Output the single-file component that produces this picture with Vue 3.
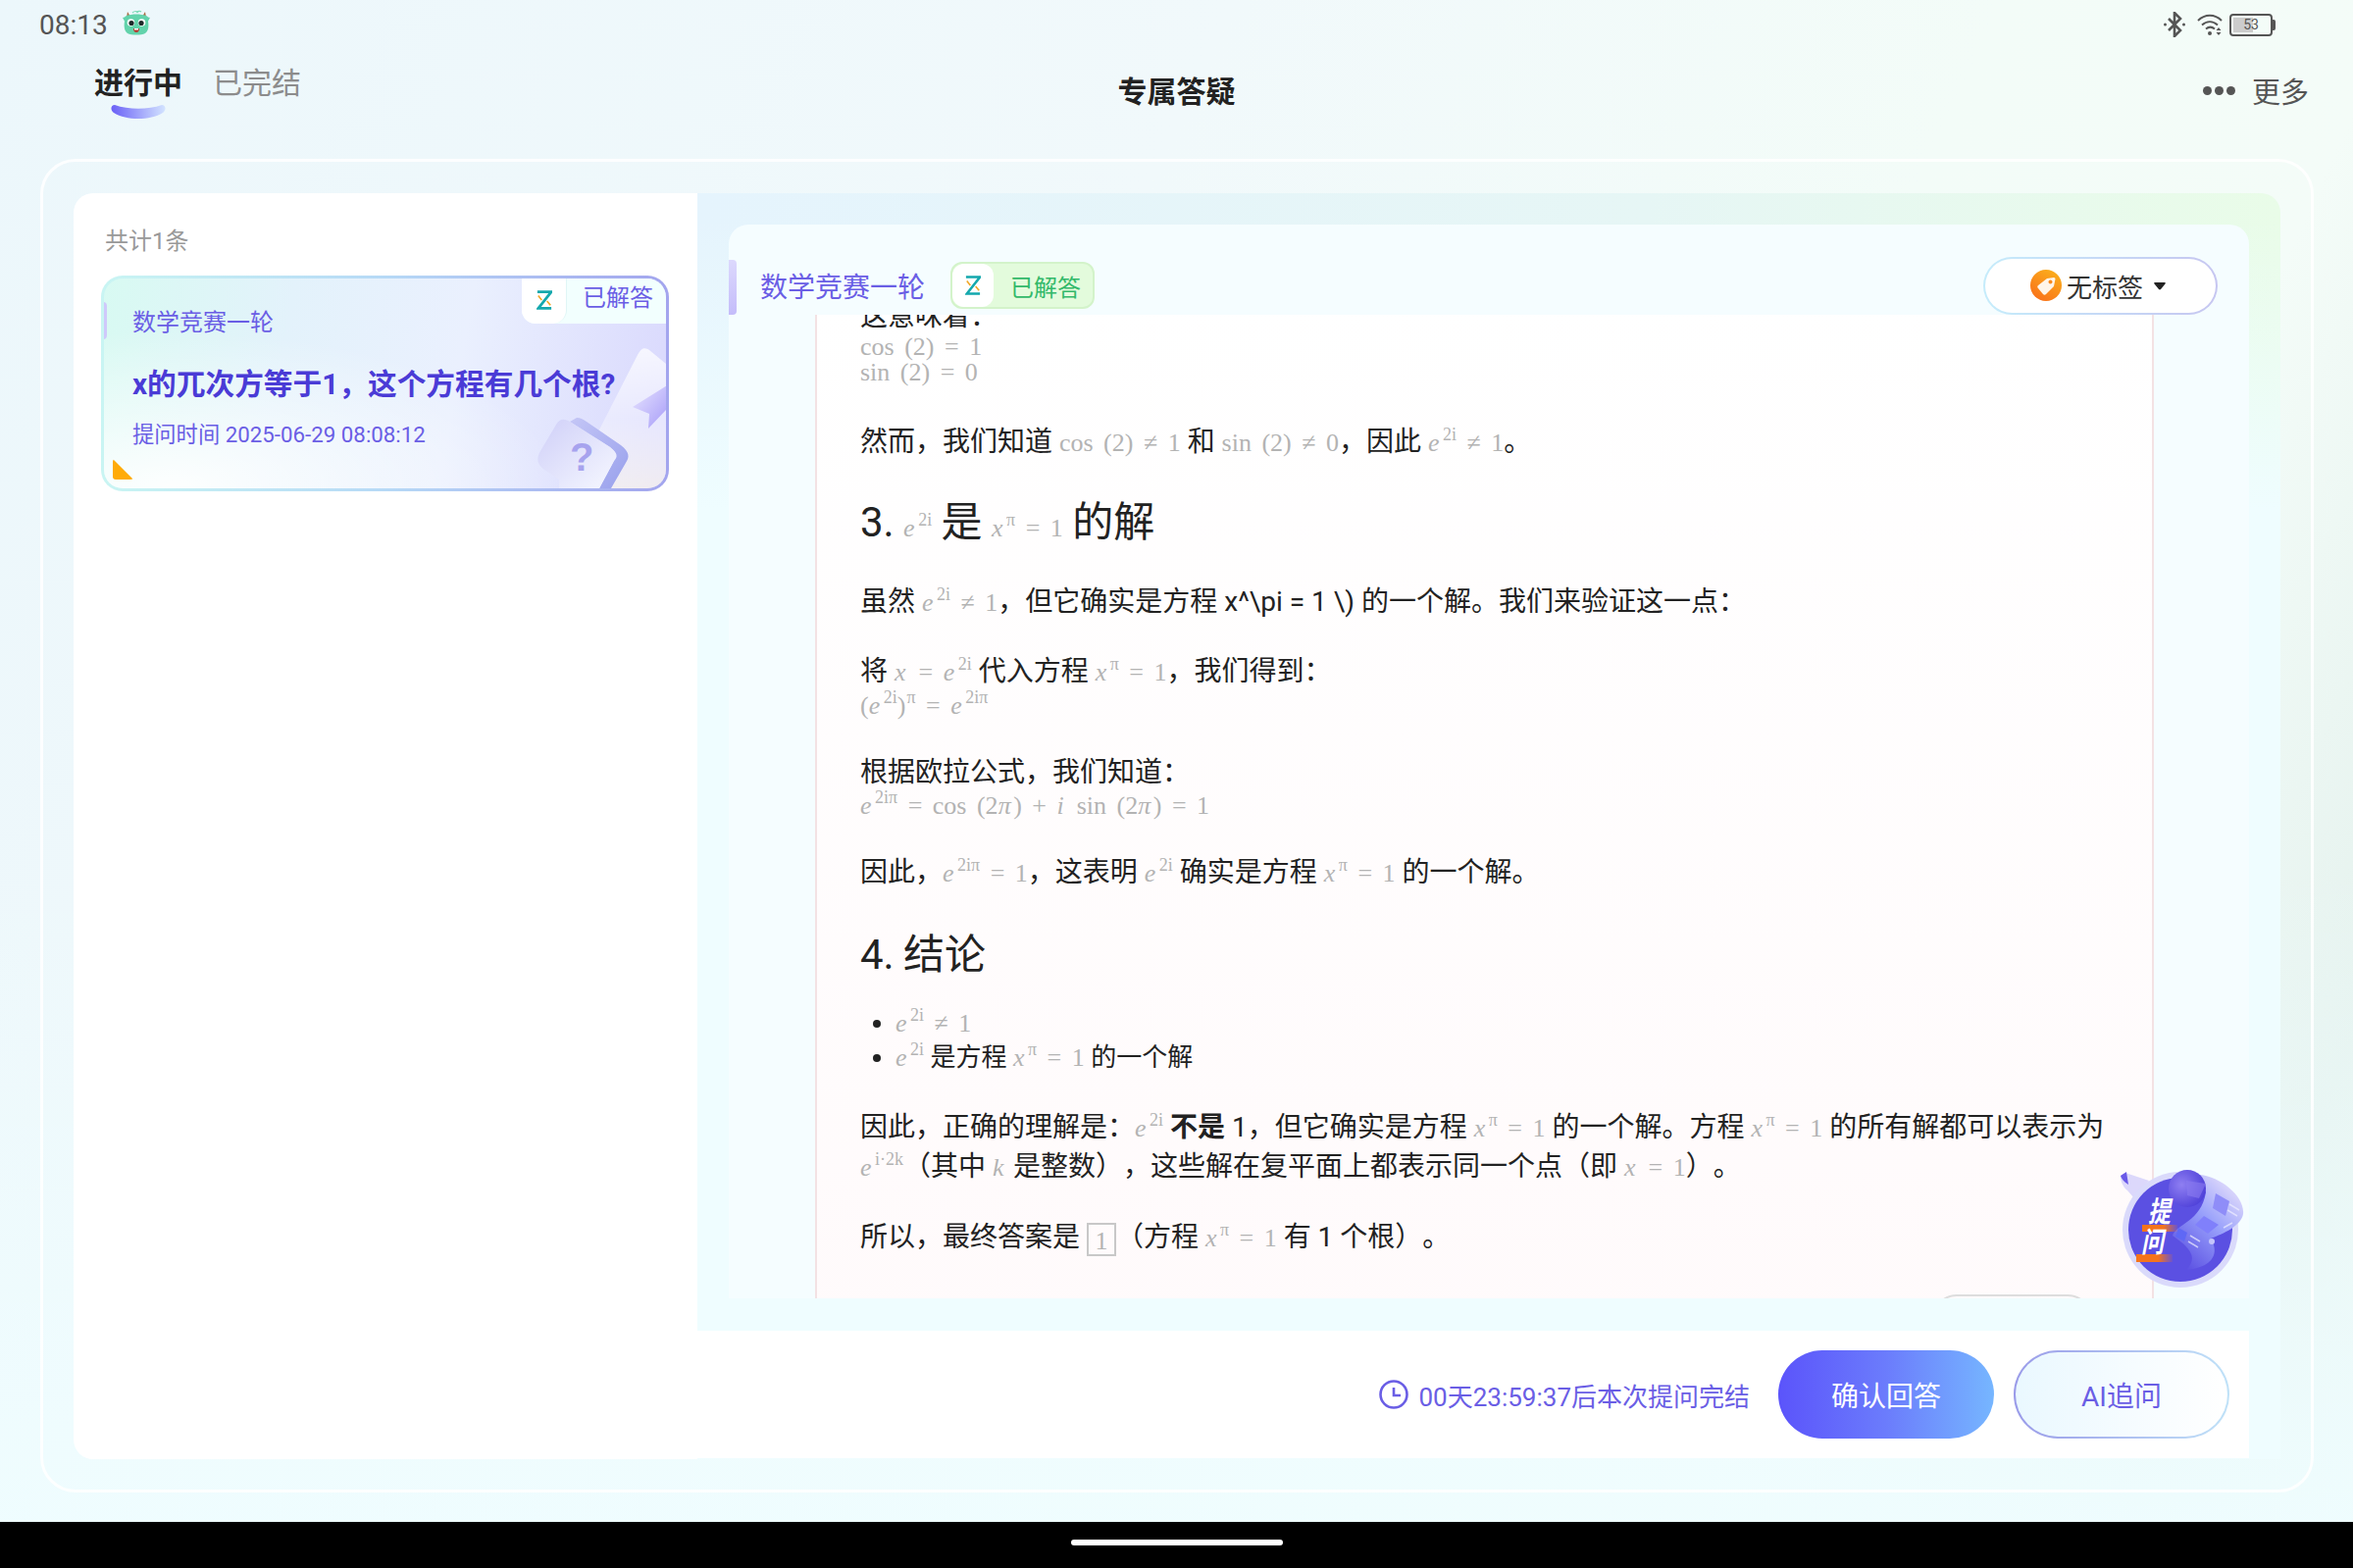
<template>
  <div class="page">
    <div class="status-bar">
      <div class="status-left">
        <span class="time">08:13</span>
        <svg class="dragon" viewBox="0 0 30 28">
          <path d="M11 4c2-2 5-2 6 0M15 4c1-2 4-2 5-1" fill="none" stroke="#7edcb8" stroke-width="1.200" />
          <path d="M6 3l3 5-4 1zM24 3l-3 5 4 1z" fill="#a9683f" />
          <path d="M5 7c6-2 14-2 20 0 2 1 2 2 4 2-1 2-2 3-2 4 1 5 0 10-3 12-4 2-14 2-18 0-3-2-4-7-3-12 0-1-1-2-2-4 2 0 2-1 4-2z" fill="#62d3ab" />
          <circle cx="9.500" cy="14" r="3.800" fill="#fff" />
          <circle cx="20.500" cy="14" r="3.800" fill="#fff" />
          <circle cx="10" cy="14.500" r="2.600" fill="#1f2a2a" />
          <circle cx="20" cy="14.500" r="2.600" fill="#1f2a2a" />
          <path d="M12 20h6c0 3-1.500 4-3 4s-3-1-3-4z" fill="#b5392f" />
          <path d="M13 20h4v1.500h-4z" fill="#fff" />
        </svg>
      </div>
      <div class="status-right">
        <svg class="bt" viewBox="0 0 22 26">
          <path d="M5 7l12 12-6 6V1l6 6L5 19" fill="none" stroke="#555" stroke-width="2.600" />
          <circle cx="1.500" cy="13" r="1.500" fill="#555" />
          <circle cx="20.500" cy="13" r="1.500" fill="#555" />
        </svg>
        <svg class="wifi" viewBox="0 0 27 24">
          <path d="M1 8c7-7 17-7 24 0M5 12.500c5-4.500 11-4.500 16 0M9 16.500c3-2.500 6-2.500 9 0" fill="none" stroke="#555" stroke-width="2" />
          <circle cx="13" cy="21" r="2" fill="#555" />
          <path d="M22 15l2.500 3h-5zM22 23l2.500-3h-5z" fill="#555" />
        </svg>
        <div class="battery">
          <div class="battery-body">
            <div class="battery-fill"></div>
            <span>53</span>
          </div>
          <div class="battery-cap"></div>
        </div>
      </div>
    </div>

    <header class="top-bar">
      <div class="tabs">
        <div class="tab active">
          <span>进行中</span>
          <svg class="tab-mark" viewBox="0 0 56 14">
            <defs>
              <linearGradient id="tabMark" x1="0" x2="1" y1="0" y2="0">
                <stop offset="0" stop-color="#6a60f6" />
                <stop offset="1" stop-color="#d3e4ff" />
              </linearGradient>
            </defs>
            <path d="M4 0c14 5 34 5 48 0 4 0 5 5 1 8C40 16 16 16 3 8-1 5 0 0 4 0z" fill="url(#tabMark)" />
          </svg>
        </div>
        <div class="tab">已完结</div>
      </div>
      <h1 class="page-title">专属答疑</h1>
      <div class="more">
        <span class="dots"><i></i><i></i><i></i></span>
        <span>更多</span>
      </div>
    </header>

    <main class="frame">
      <aside class="list-panel">
        <div class="list-count">共计1条</div>
        <div class="q-card">
          <svg class="q-deco" viewBox="0 0 573 214">
            <defs>
              <linearGradient id="decoDoc" x1="0" x2="0" y1="0" y2="1">
                <stop offset="0" stop-color="#fff" stop-opacity="0.75" />
                <stop offset="0.5" stop-color="#fff" stop-opacity="0.35" />
                <stop offset="1" stop-color="#fff8e8" stop-opacity="0.6" />
              </linearGradient>
              <linearGradient id="decoMark" x1="0" x2="1" y1="0" y2="1">
                <stop offset="0" stop-color="#e9e6ff" />
                <stop offset="1" stop-color="#a79cf8" />
              </linearGradient>
              <linearGradient id="decoBack" x1="0" x2="1" y1="0" y2="1">
                <stop offset="0" stop-color="#c4c6f6" />
                <stop offset="1" stop-color="#98a0ec" />
              </linearGradient>
              <linearGradient id="decoFront" x1="0" x2="1" y1="0" y2="1">
                <stop offset="0" stop-color="#cfcff8" />
                <stop offset="1" stop-color="#f6f8ff" />
              </linearGradient>
            </defs>
            <path d="M500 164l44-86c4-8 8-8 12-5l17 14v127h-73z" fill="url(#decoDoc)" />
            <path d="M539 131l35-22v24l-19 20 1-15z" fill="url(#decoMark)" />
            <path d="M482 142c4 0 7 2 10 4l35 24c9 7 9 12 5 18l-15 26h-12l15-28c4-8 0-10-4-14l-41-26z" fill="url(#decoBack)" />
            <path d="M445 176l16-27c4-7 9-6 14-3l41 26c8 6 8 10 4 14l-15 28h-41v-9l-15-10c-8-6-8-12-4-19z" fill="url(#decoFront)" />
            <text x="475" y="196" class="deco-q">?</text>
          </svg>
          <span class="q-accent"></span>
          <div class="q-status">
            <span class="q-logo">
              <svg class="z-icon" viewBox="0 0 18 24">
                <path d="M1 2.500h16L2 21.500h15" fill="none" stroke="#14a8ad" stroke-width="3.200" />
                <path d="M2 7l4 5M12 13l4 5" stroke="#f2a724" stroke-width="1.800" />
              </svg>
            </span>
            <span class="q-status-text">已解答</span>
          </div>
          <div class="q-subject">数学竞赛一轮</div>
          <div class="q-title">x的兀次方等于1，这个方程有几个根?</div>
          <div class="q-time">提问时间 2025-06-29 08:08:12</div>
          <span class="q-corner"></span>
        </div>
      </aside>

      <section class="detail">
        <div class="answer-card">
          <div class="answer-head">
            <span class="head-accent"></span>
            <span class="head-subject">数学竞赛一轮</span>
            <div class="head-chip">
              <span class="chip-logo">
                <svg class="z-icon" viewBox="0 0 18 24">
                  <path d="M1 2.500h16L2 21.500h15" fill="none" stroke="#14a8ad" stroke-width="2.800" />
                  <path d="M2 7l4 5M12 13l4 5" stroke="#f2a724" stroke-width="1.800" />
                </svg>
              </span>
              <span class="chip-text">已解答</span>
            </div>
            <div class="tag-pill">
              <svg class="tag-icon" viewBox="0 0 32 32">
                <defs>
                  <linearGradient id="tagBg" x1="0.8" x2="0.2" y1="0" y2="1">
                    <stop offset="0" stop-color="#fbb01c" />
                    <stop offset="1" stop-color="#f9701a" />
                  </linearGradient>
                </defs>
                <circle cx="16" cy="16" r="16" fill="url(#tagBg)" />
                <path d="M8 16l9-7 7-1c1 0 1.500 1 1.500 1.500L24 17l-8 8c-1 1-2 1-3 0l-5-6c-1-1-1-2 0-3z" fill="#fff5e8" />
                <circle cx="20.500" cy="12.500" r="2" fill="#f98a1c" />
              </svg>
              <span>无标签</span>
              <svg class="tag-caret" viewBox="0 0 12 9">
                <path d="M1 1h10c1 0 1 1 .5 1.500L7 8c-.5.5-1.500.5-2 0L.5 2.500C0 2 0 1 1 1z" fill="#222" />
              </svg>
            </div>
          </div>

          <div class="answer-scroll">
            <div class="answer-body">
              <p class="clipped">这意味着：</p>
              <div class="m-line"><span class="m">cos (2) = 1</span></div>
              <div class="m-line"><span class="m">sin (2) = 0</span></div>

              <p class="after-math first">
                然而，我们知道 <span class="m">cos (2) ≠ 1</span> 和 <span class="m">sin (2) ≠ 0</span>，因此 <span class="m"><i>e</i><sup>2i</sup> ≠ 1</span>。
              </p>

              <h3>3. <span class="m"><i>e</i><sup>2i</sup></span> 是 <span class="m"><i>x</i><sup>π</sup> = 1</span> 的解</h3>

              <p class="short">虽然 <span class="m"><i>e</i><sup>2i</sup> ≠ 1</span>，但它确实是方程 x^\pi = 1 \) 的一个解。我们来验证这一点：</p>

              <p class="with-math">将 <span class="m"><i>x</i> = <i>e</i><sup>2i</sup></span> 代入方程 <span class="m"><i>x</i><sup>π</sup> = 1</span>，我们得到：</p>
              <div class="m-line"><span class="m">(<i>e</i><sup>2i</sup>)<sup>π</sup> = <i>e</i><sup>2iπ</sup></span></div>

              <p class="with-math after-math">根据欧拉公式，我们知道：</p>
              <div class="m-line"><span class="m"><i>e</i><sup>2iπ</sup> = cos (2<i>π</i>) + <i>i</i> sin (2<i>π</i>) = 1</span></div>

              <p class="after-math">因此，<span class="m"><i>e</i><sup>2iπ</sup> = 1</span>，这表明 <span class="m"><i>e</i><sup>2i</sup></span> 确实是方程 <span class="m"><i>x</i><sup>π</sup> = 1</span> 的一个解。</p>

              <h3 class="before-list">4. 结论</h3>

              <ul>
                <li><span class="m"><i>e</i><sup>2i</sup> ≠ 1</span></li>
                <li><span class="m"><i>e</i><sup>2i</sup></span> 是方程 <span class="m"><i>x</i><sup>π</sup> = 1</span> 的一个解</li>
              </ul>

              <p class="tight">
                因此，正确的理解是：<span class="m"><i>e</i><sup>2i</sup></span> <b>不是</b> 1，但它确实是方程 <span class="m"><i>x</i><sup>π</sup> = 1</span> 的一个解。方程 <span class="m"><i>x</i><sup>π</sup> = 1</span> 的所有解都可以表示为<br>
                <span class="m"><i>e</i><sup>i·2k</sup></span>（其中 <span class="m"><i>k</i></span> 是整数），这些解在复平面上都表示同一个点（即 <span class="m"><i>x</i> = 1</span>）。
              </p>

              <p>所以，最终答案是 <span class="m box">1</span>（方程 <span class="m"><i>x</i><sup>π</sup> = 1</span> 有 1 个根）。</p>

              <div class="next-btn"></div>
            </div>
          </div>
        </div>

        <div class="action-bar">
          <svg class="clock" viewBox="0 0 30 30">
            <circle cx="15" cy="15" r="13.500" fill="none" stroke="#6a5ee5" stroke-width="2.600" />
            <path d="M15 8v8h7" fill="none" stroke="#6a5ee5" stroke-width="2.600" />
          </svg>
          <span class="countdown">00天23:59:37后本次提问完结</span>
          <button class="btn primary">确认回答</button>
          <button class="btn ghost">AI追问</button>
        </div>

        <svg class="ask-float" viewBox="0 0 130 130">
          <defs>
            <linearGradient id="ribbon" x1="0.9" x2="0.2" y1="0" y2="1">
              <stop offset="0" stop-color="#f0e8fb" />
              <stop offset="0.5" stop-color="#98a0fb" />
              <stop offset="1" stop-color="#5b50e2" />
            </linearGradient>
            <radialGradient id="ball" cx="0.35" cy="0.4" r="0.7">
              <stop offset="0" stop-color="#8f7ff2" />
              <stop offset="1" stop-color="#4d3fd8" />
            </radialGradient>
            <linearGradient id="barFade" x1="0" x2="1" y1="0" y2="0">
              <stop offset="0" stop-color="#f5741c" />
              <stop offset="0.6" stop-color="#f5741c" />
              <stop offset="1" stop-color="#f5741c" stop-opacity="0.1" />
            </linearGradient>
          </defs>
          <path d="M3 11l5-3 24 8-15 18-7-8c-5-4-7-10-7-15z" fill="#dcd8fb" />
          <path d="M3 11l6-4 2 13c-5-3-7-6-8-9z" fill="#6a5ae8" />
          <circle cx="64" cy="66" r="59" fill="#dadafb" />
          <circle cx="64" cy="66" r="53" fill="#5b50e2" />
          <path d="M84 10c21 2 46 22 44 40-2 12-20 20-33 25 8 13 5 29-25 32 12-12 5-22-14-35 4-12 29-14 34-44z" fill="url(#ribbon)" />
          <circle cx="71" cy="24" r="19" fill="url(#ball)" />
          <path d="M70 16l20 3-7 15-12-3z" fill="#8a7bf0" opacity="0.6" />
          <path d="M100 29l14 8-4 15-13-8z" fill="#8f8df8" />
          <path d="M88 52l15 9-11 9-13-9z" fill="#8080fb" />
          <path d="M62 64l9 5-3 9-9-5z" fill="#5f68f5" />
          <path d="M114 40l10 6M112 46l10 6M108 64l9-5M74 72l10 6M72 78l10 6" stroke="#eef" stroke-width="1.500" opacity="0.7" />
          <circle cx="96" cy="78" r="3" fill="#c4c4fb" />
          <rect x="25" y="61" width="36" height="7" fill="url(#barFade)" />
          <rect x="19" y="91" width="37" height="8" fill="url(#barFade)" />
          <text transform="translate(31 58) scale(0.85 1.08)" class="ask-text">提</text>
          <text transform="translate(24 89) scale(0.85 1.08)" class="ask-text">问</text>
        </svg>
      </section>
    </main>

    <div class="nav-bar">
      <span class="home-bar"></span>
    </div>
  </div>
</template>

<script setup>
</script>

<style>
html,
body {
  margin: 0;
  background: #000;
}
</style>

<style scoped>
.page {
  width: 2399px;
  height: 1599px;
  display: flex;
  flex-direction: column;
  overflow: hidden;
  font-family: Roboto, "Noto Sans CJK SC", sans-serif;
  color: #222;
  text-spacing-trim: space-all;
  background:
    linear-gradient(180deg, rgba(239, 253, 255, 0) 55%, #effdff 100%),
    linear-gradient(115deg, #ecf7fb 0%, #f1f9fb 40%, #f3fcf8 65%, #f4fcf8 78%, #e5f2ee 92%, #e9f5f1 100%);
}

.status-bar {
  height: 50px;
  flex-shrink: 0;
  display: flex;
  align-items: center;
  justify-content: space-between;
  padding: 0 79px 0 40px;
}

.status-left {
  display: flex;
  align-items: center;
  gap: 14px;
}

.time {
  font-size: 28px;
  color: #555;
}

.dragon {
  width: 30px;
  height: 28px;
  margin-top: -4px;
}

.status-right {
  display: flex;
  align-items: center;
  gap: 12px;
}

.bt {
  width: 22px;
  height: 26px;
}

.wifi {
  width: 27px;
  height: 24px;
}

.battery {
  display: flex;
  align-items: center;
  margin-left: -6px;
}

.battery-body {
  position: relative;
  width: 44px;
  height: 23px;
  box-sizing: border-box;
  border: 2px solid #555;
  border-radius: 4px;
  padding: 2px;
  font-size: 14px;
  line-height: 15px;
  text-align: center;
  color: #555;
}

.battery-fill {
  position: absolute;
  left: 2px;
  top: 2px;
  bottom: 2px;
  width: 20px;
  background: #ccc;
}

.battery-body span {
  position: relative;
}

.battery-cap {
  width: 3px;
  height: 11px;
  background: #555;
  border-radius: 0 2px 2px 0;
}

.top-bar {
  height: 112px;
  flex-shrink: 0;
  display: grid;
  grid-template-columns: 1fr auto 1fr;
  padding: 0 45px;
}

.tabs {
  display: flex;
  gap: 31px;
  padding: 15px 0 0 51px;
  align-items: flex-start;
}

.tab {
  display: flex;
  flex-direction: column;
  align-items: center;
  font-size: 30px;
  line-height: 40px;
  color: #8c8c8c;
}

.tab.active {
  color: #222;
  font-weight: 700;
}

.tab-mark {
  width: 56px;
  height: 14px;
  margin-top: 2px;
}

.page-title {
  margin: 24px 0 0;
  font-size: 30px;
  line-height: 40px;
  font-weight: 700;
  color: #222;
}

.more {
  display: flex;
  align-items: center;
  justify-content: flex-end;
  gap: 17px;
  height: 40px;
  margin-top: 22px;
  font-size: 29px;
  color: #555;
}

.dots {
  display: flex;
  gap: 3px;
}

.dots i {
  width: 9px;
  height: 9px;
  border-radius: 50%;
  background: #555;
}

.frame {
  flex-shrink: 0;
  height: 1360px;
  box-sizing: border-box;
  margin: 0 40px 30px 41px;
  padding: 32px 31px 31px;
  border: 3px solid rgba(255, 255, 255, 0.85);
  border-radius: 36px;
  display: flex;
}

.list-panel {
  width: 636px;
  flex-shrink: 0;
  box-sizing: border-box;
  padding: 33px 28px;
  background: #fff;
  border-radius: 20px 0 0 20px;
}

.list-count {
  font-size: 24px;
  line-height: 32px;
  padding-left: 4px;
  color: #999;
  margin-bottom: 19px;
}

.q-card {
  position: relative;
  width: 579px;
  height: 220px;
  box-sizing: border-box;
  border: 3px solid transparent;
  border-radius: 22px;
  overflow: hidden;
  background:
    radial-gradient(ellipse 70% 75% at 12% 100%, rgba(255, 255, 255, 0.95), rgba(255, 255, 255, 0)) padding-box,
    linear-gradient(100deg, #d8faf2 0%, #e3f2fb 32%, #eaf0fe 62%, #d9d8fd 100%) padding-box,
    linear-gradient(90deg, #c9f5f3 0%, #b6d9f6 50%, #a3a5ee 100%) border-box;
}

.q-deco {
  position: absolute;
  left: 0;
  top: 0;
  width: 573px;
  height: 214px;
}

.deco-q {
  font-family: "Liberation Sans", sans-serif;
  font-size: 40px;
  font-weight: 700;
  fill: #a7a3ee;
}

.q-accent {
  position: absolute;
  left: -3px;
  top: 24px;
  width: 6px;
  height: 38px;
  border-radius: 0 4px 4px 0;
  background: #cfc9fb;
}

.q-status {
  position: absolute;
  right: 0;
  top: -3px;
  height: 49px;
  display: flex;
  background: #f2fffe;
  border-radius: 0 0 0 14px;
}

.q-logo {
  width: 45px;
  display: flex;
  align-items: center;
  justify-content: center;
  background: #fff;
  border-radius: 0 0 14px 14px;
  border-right: 1px solid #e0f6f6;
}

.z-icon {
  width: 16px;
  height: 22px;
}

.q-status-text {
  padding: 0 13px 0 16px;
  font-size: 24px;
  line-height: 46px;
  color: #6a5ee5;
}

.q-subject {
  position: relative;
  margin: 29px 0 0 29px;
  font-size: 24px;
  line-height: 32px;
  color: #6a5ee5;
}

.q-title {
  position: relative;
  margin: 27px 0 0 29px;
  font-size: 29.700px;
  line-height: 40px;
  font-weight: 700;
  color: #4a3bd6;
  white-space: nowrap;
}

.q-time {
  position: relative;
  margin: 15px 0 0 29px;
  font-size: 22.300px;
  line-height: 32px;
  color: #6a5ee5;
}

.q-corner {
  position: absolute;
  left: 9px;
  bottom: 9px;
  width: 21px;
  height: 21px;
  background: #ffab08;
  clip-path: polygon(0 0, 100% 100%, 0 100%);
  border-radius: 3px;
}

.detail {
  position: relative;
  flex: 1;
  display: flex;
  flex-direction: column;
  box-sizing: border-box;
  padding: 32px 32px 0;
  border-radius: 0 20px 0 0;
  background:
    linear-gradient(180deg, rgba(239, 253, 255, 0) 2%, #effdff 25%),
    linear-gradient(90deg, #e5f4fd 0%, #e6f6f5 60%, #e9fce8 100%);
}

.answer-card {
  height: 1095px;
  flex-shrink: 0;
  display: flex;
  flex-direction: column;
  background: #f5fdff;
  border-radius: 20px 20px 0 0;
}

.answer-head {
  height: 92px;
  flex-shrink: 0;
  display: flex;
  align-items: center;
  padding: 32px 32px 0 0;
  box-sizing: border-box;
}

.head-accent {
  width: 8px;
  height: 56px;
  margin-top: 4px;
  border-radius: 0 4px 4px 0;
  background: linear-gradient(180deg, #dcd8fd, #c4bcfa);
}

.head-subject {
  margin-left: 24px;
  font-size: 28px;
  color: #6a5ee5;
}

.head-chip {
  display: flex;
  align-items: center;
  height: 48px;
  box-sizing: border-box;
  margin-left: 26px;
  padding-right: 12px;
  border: 2px solid #d3f3ca;
  border-radius: 12px;
  background: #e3fbdc;
}

.chip-logo {
  width: 42px;
  height: 44px;
  display: flex;
  align-items: center;
  justify-content: center;
  background: #fff;
  border-radius: 12px;
}

.chip-text {
  margin-left: 17px;
  font-size: 24px;
  color: #33b96a;
}

.tag-pill {
  margin-left: auto;
  display: flex;
  align-items: center;
  justify-content: center;
  gap: 5px;
  width: 239px;
  height: 59px;
  box-sizing: border-box;
  padding-right: 5px;
  border: 2px solid transparent;
  border-radius: 30px;
  font-size: 26px;
  color: #333;
  background:
    linear-gradient(#fff, #fff) padding-box,
    linear-gradient(90deg, #c5ecfb, #c6c6f1) border-box;
}

.tag-icon {
  width: 32px;
  height: 32px;
}

.tag-caret {
  width: 12px;
  height: 9px;
  margin-left: 6px;
}

.answer-scroll {
  flex: 1;
  min-height: 0;
  overflow: hidden;
  padding: 0 97px 0 88px;
}

.answer-body {
  display: flex;
  flex-direction: column;
  height: 1100px;
  box-sizing: border-box;
  margin-top: -15px;
  padding: 0 45px 0 44px;
  border-left: 2px solid #f3e2e4;
  border-right: 2px solid #f3e2e4;
  background: linear-gradient(180deg, #fff 0%, #fffafb 100%);
  font-size: 28px;
  line-height: 40px;
  color: #222;
}

.answer-body p {
  margin: 0 0 33px;
  white-space: nowrap;
  flex-shrink: 0;
}

.answer-body p.clipped {
  line-height: 34px;
  margin: 0;
}

.answer-body p.short {
  margin-bottom: 30px;
}

.answer-body p.with-math {
  margin-bottom: 0;
}

.answer-body p.tight {
  line-height: 39px;
  margin-bottom: 32px;
}

.answer-body .after-math {
  margin-top: 36px;
}

.answer-body .after-math.first {
  margin-top: 39px;
}

.answer-body h3 {
  margin: 0 0 27px;
  font-size: 42px;
  line-height: 56px;
  font-weight: 400;
  word-spacing: -1px;
  flex-shrink: 0;
}

.answer-body h3.before-list {
  margin-top: 2px;
  margin-bottom: 24px;
}

.answer-body ul {
  margin: 0 0 34px;
  padding-left: 36px;
  font-size: 26px;
  line-height: 35px;
  flex-shrink: 0;
}

.answer-body b {
  font-weight: 700;
}

.m-line {
  height: 26px;
  line-height: 26px;
  flex-shrink: 0;
}

.m {
  font-family: "Liberation Serif", serif;
  font-size: 26px;
  font-weight: 400;
  word-spacing: 4px;
  color: #b3b3b3;
  white-space: nowrap;
}

.m i {
  font-style: italic;
  margin-right: 2.500px;
}

.m sup {
  font-size: 18px;
  line-height: 0;
  vertical-align: 11px;
  margin-left: 1px;
}

.box {
  display: inline-block;
  box-sizing: border-box;
  width: 30px;
  height: 34px;
  line-height: 34px;
  text-align: center;
  vertical-align: middle;
  border: 2px solid #c8c8c8;
}

.next-btn {
  align-self: flex-end;
  flex-shrink: 0;
  width: 163px;
  height: 50px;
  margin: 4px 16px 0 0;
  box-sizing: border-box;
  border: 2px solid #ddd;
  border-radius: 25px;
}

.action-bar {
  height: 130px;
  flex-shrink: 0;
  display: flex;
  align-items: center;
  box-sizing: border-box;
  margin: 33px 0 0 -32px;
  padding-right: 20px;
  justify-content: flex-end;
  background: #fff;
}

.clock {
  width: 30px;
  height: 30px;
  margin-right: 11px;
}

.countdown {
  font-size: 26px;
  color: #6a5ee5;
  margin-right: 29px;
}

.btn {
  width: 220px;
  height: 90px;
  box-sizing: border-box;
  border-radius: 45px;
  font-family: inherit;
  font-size: 28px;
}

.btn.primary {
  border: 0;
  color: #fff;
  background: linear-gradient(90deg, #5b54fb 0%, #6b7cfc 50%, #76b6ff 100%);
}

.btn.ghost {
  margin-left: 20px;
  border: 2px solid transparent;
  color: #6a5ee5;
  background:
    linear-gradient(90deg, #eaf8ff, #fff) padding-box,
    linear-gradient(90deg, #9a9be9, #c0e2f8) border-box;
}

.ask-float {
  position: absolute;
  right: 36px;
  bottom: 170px;
  width: 130px;
  height: 130px;
  overflow: visible;
}

.ask-text {
  font-family: "Noto Sans CJK SC", sans-serif;
  font-size: 27px;
  font-weight: 700;
  font-style: italic;
  fill: #fff;
}

.nav-bar {
  flex: 1;
  display: flex;
  align-items: center;
  justify-content: center;
  padding-bottom: 5px;
  background: #000;
}

.home-bar {
  width: 216px;
  height: 6px;
  border-radius: 3px;
  background: #fff;
}
</style>
